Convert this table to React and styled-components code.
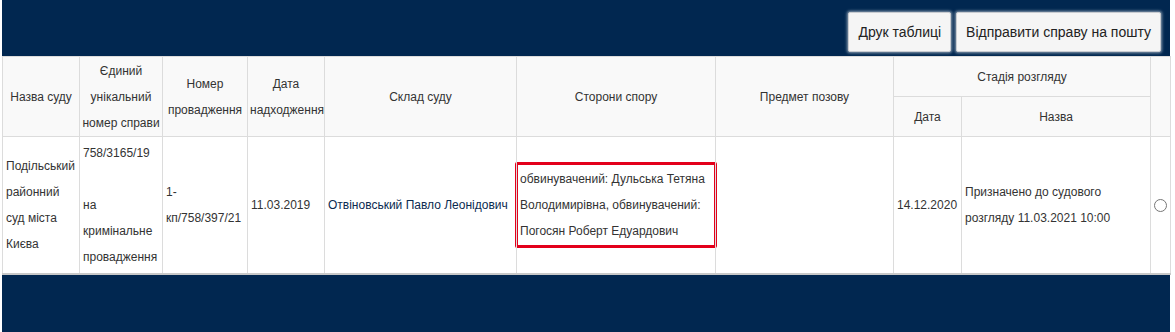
import React from "react";
import styled, { createGlobalStyle } from "styled-components";

const GlobalStyle = createGlobalStyle`
  body {
    margin: 0;
    background: #ffffff;
    font-family: "Liberation Sans", Arial, sans-serif;
  }
`;

const Page = styled.div`
  width: 1168px;
  margin-left: 2px;
  background: #012750;
`;

const TopBar = styled.div`
  height: 56px;
  box-sizing: border-box;
  padding: 12px 9px 0 0;
  display: flex;
  justify-content: flex-end;
  align-items: flex-start;
  gap: 5px;
`;

const Button = styled.button`
  height: 40px;
  padding: 0 9px;
  background: #f5f5f5;
  border: 1px solid #c9ccd1;
  border-radius: 2px;
  box-shadow: 0 0 3px 1px rgba(255, 255, 255, 0.55);
  font-family: "Liberation Sans", Arial, sans-serif;
  font-size: 14px;
  color: #222;
  cursor: pointer;
`;

const Table = styled.table`
  width: 1168px;
  table-layout: fixed;
  border-collapse: collapse;
  background: #ffffff;
  border-top: 1px solid #c8c8c8;
  border-bottom: 2px solid #c8c8c8;
  font-size: 12px;
  color: #333;
`;

const Th = styled.th`
  background: #f9f9f9;
  border: 1px solid #dcdcdc;
  font-weight: normal;
  text-align: center;
  vertical-align: middle;
  line-height: 26px;
  padding: 0 2px;
  height: 39px;
`;

const Td = styled.td`
  border: 1px solid #dcdcdc;
  vertical-align: middle;
  line-height: 26px;
  color: ${(p) => (p.$link ? "#0b2a50" : "#333")};
  padding: ${(p) => (p.$flush ? "0" : "3px")};
  text-align: ${(p) => (p.$center ? "center" : "left")};
`;

const HeadRow = styled.tr`
  height: 40px;
`;

const BodyRow = styled.tr`
  height: 137px;
`;

const Marked = styled.div`
  border: 3px solid #e3001b;
  border-radius: 2px;
  margin: 0 -2px;
  padding: 1px 2px;
`;

const Radio = styled.input`
  margin: 0;
  width: 13px;
  height: 13px;
  vertical-align: middle;
`;

const Footer = styled.div`
  height: 57px;
`;

const widths = [77, 83, 85, 77, 192, 199, 178, 68, 189, 20];

export default function App() {
  return (
    <>
      <GlobalStyle />
      <Page>
        <TopBar>
          <Button>Друк таблиці</Button>
          <Button>Відправити справу на пошту</Button>
        </TopBar>
        <Table>
          <colgroup>
            {widths.map((w, i) => (
              <col key={i} style={{ width: w }} />
            ))}
          </colgroup>
          <thead>
            <HeadRow>
              <Th rowSpan={2}>Назва суду</Th>
              <Th rowSpan={2}>Єдиний унікальний номер справи</Th>
              <Th rowSpan={2}>Номер провадження</Th>
              <Th rowSpan={2}>Дата надходження</Th>
              <Th rowSpan={2}>Склад суду</Th>
              <Th rowSpan={2}>Сторони спору</Th>
              <Th rowSpan={2}>Предмет позову</Th>
              <Th colSpan={2}>Стадія розгляду</Th>
              <Th rowSpan={2}></Th>
            </HeadRow>
            <HeadRow>
              <Th>Дата</Th>
              <Th>Назва</Th>
            </HeadRow>
          </thead>
          <tbody>
            <BodyRow>
              <Td>Подільський районний суд міста Києва</Td>
              <Td>
                758/3165/19
                <br />
                <br />
                на кримінальне провадження
              </Td>
              <Td>1-кп/758/397/21</Td>
              <Td>11.03.2019</Td>
              <Td $link>Отвіновський Павло Леонідович</Td>
              <Td $flush>
                <Marked>
                  обвинувачений: Дульська Тетяна Володимирівна, обвинувачений:
                  Погосян Роберт Едуардович
                </Marked>
              </Td>
              <Td></Td>
              <Td>14.12.2020</Td>
              <Td>Призначено до судового розгляду 11.03.2021 10:00</Td>
              <Td $flush $center>
                <Radio type="radio" name="case" />
              </Td>
            </BodyRow>
          </tbody>
        </Table>
        <Footer />
      </Page>
    </>
  );
}
